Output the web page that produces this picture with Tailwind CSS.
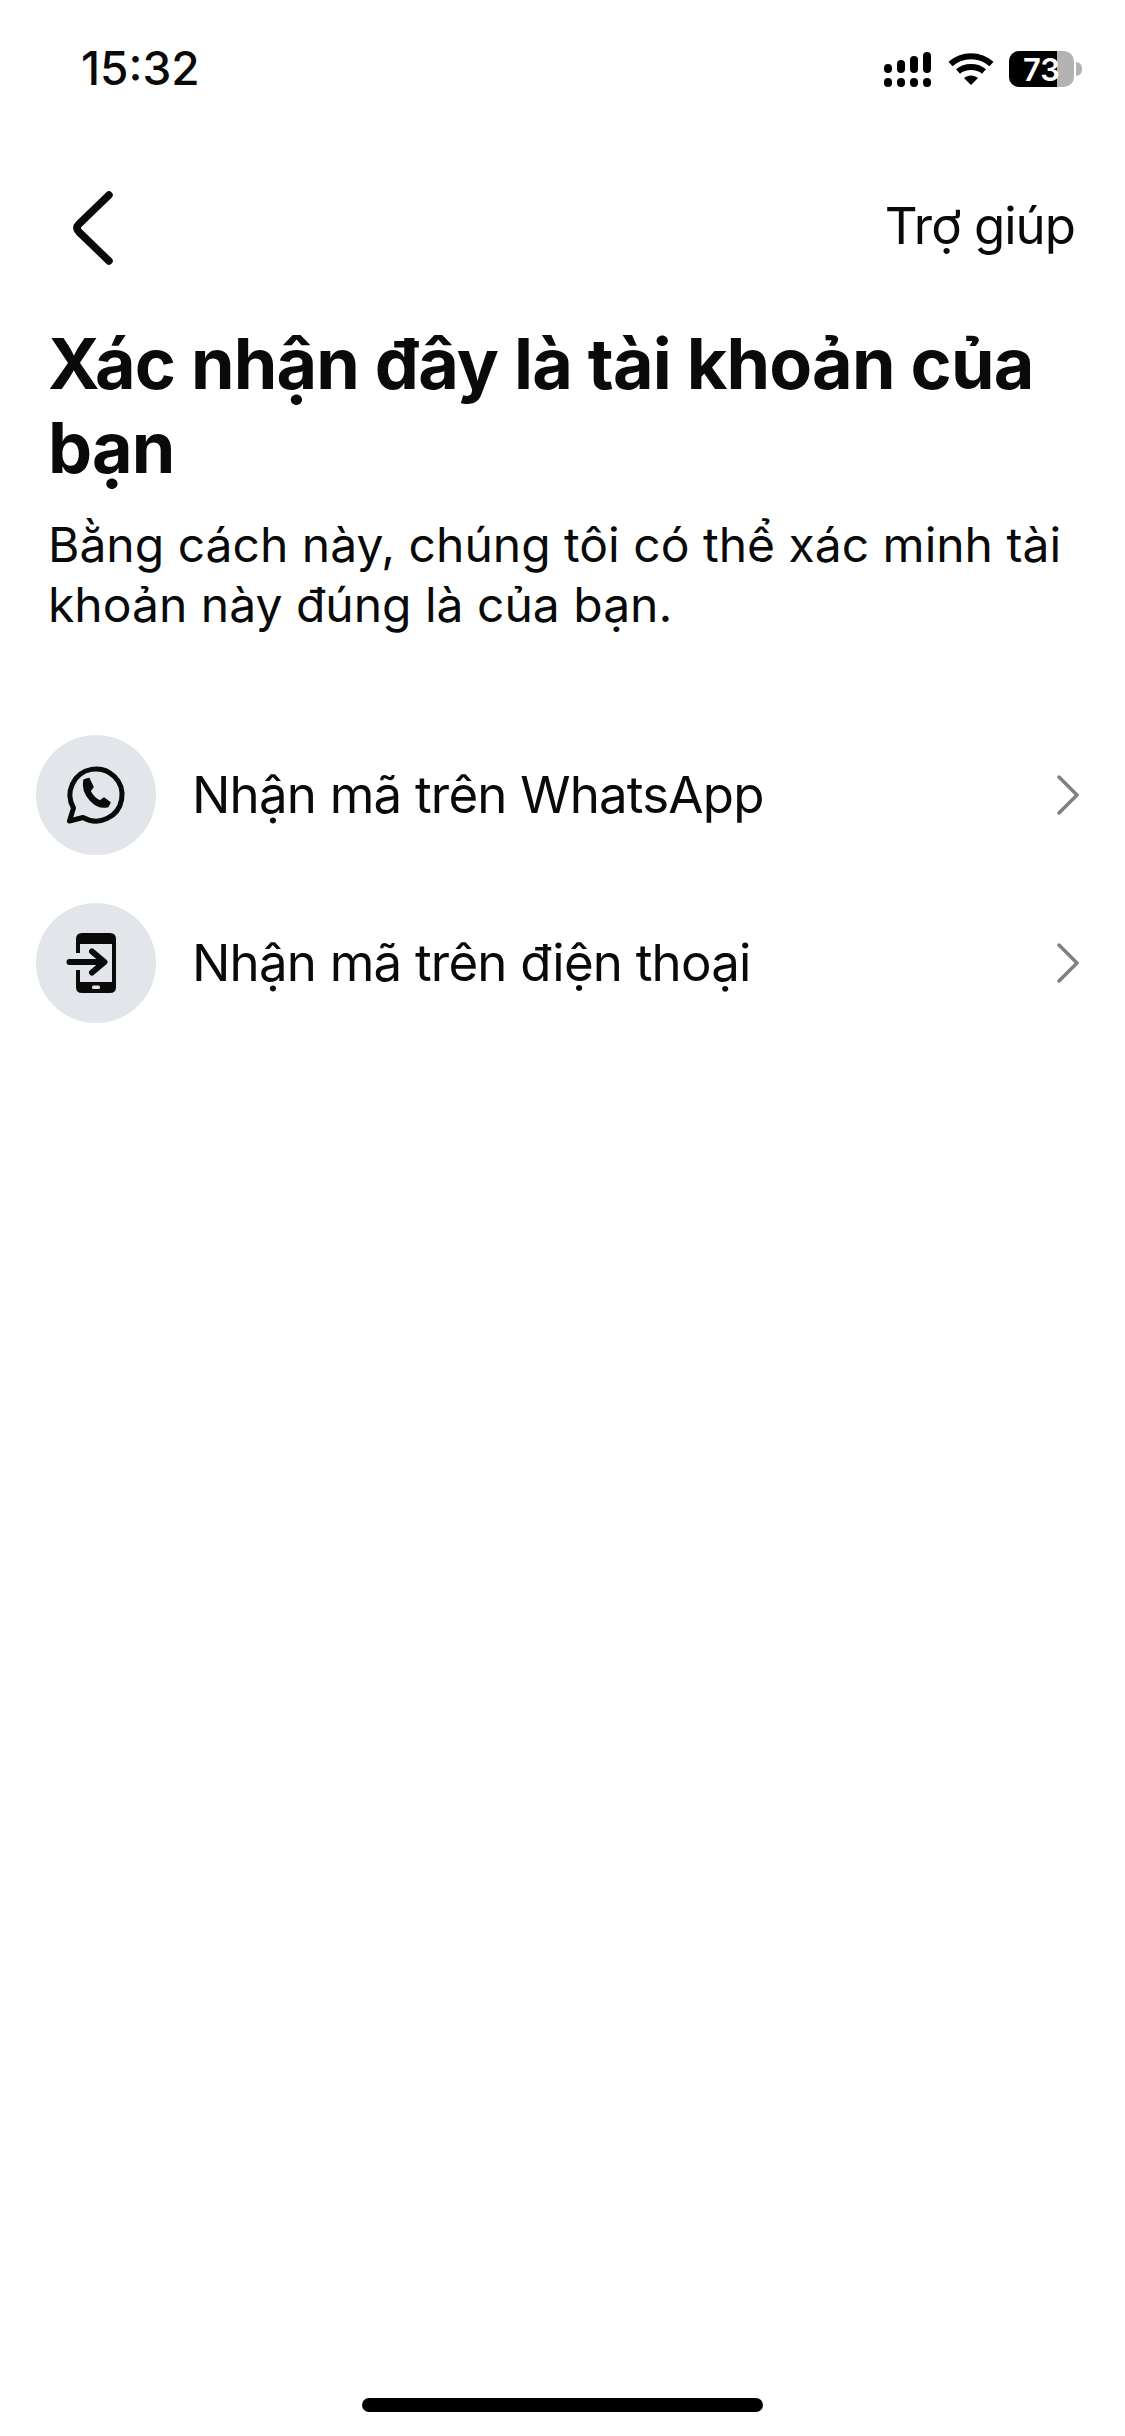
<!DOCTYPE html>
<html lang="vi">
<head>
<meta charset="utf-8">
<title>Xác nhận tài khoản</title>
<script src="https://cdn.jsdelivr.net/npm/@tailwindcss/browser@4"></script>
</head>
<body class="bg-white">
<div class="w-[1125px] h-[2436px] flex flex-col bg-white text-[#0a0a0a] font-['Inter','Noto_Sans',sans-serif] overflow-hidden">

  <!-- Status bar -->
  <div class="h-[137px] shrink-0 flex items-start justify-between pl-[81px] pr-[43px] pt-[40px]">
    <span class="text-[46px] leading-[56px] font-medium">15:32</span>
    <div class="flex items-center gap-[17px] pt-[11px]">
      <svg width="47" height="35" viewBox="0 0 47 35" fill="#000">
        <rect x="0" y="12" width="8" height="9" rx="4"/><rect x="13" y="8" width="8" height="13" rx="4"/><rect x="26" y="4" width="8" height="17" rx="4"/><rect x="39" y="0" width="8" height="21" rx="4"/>
        <rect x="0" y="26" width="8" height="9" rx="4"/><rect x="13" y="26" width="8" height="9" rx="4"/><rect x="26" y="26" width="8" height="9" rx="4"/><rect x="39" y="26" width="8" height="9" rx="4"/>
      </svg>
      <svg width="46" height="32" viewBox="0 0 46 32" fill="none" stroke="#000" stroke-width="6">
        <path d="M2.5 11 C14 0.5 32 0.5 43.5 11"/>
        <path d="M10 18.5 C17 12.5 29 12.5 36 18.5"/>
        <path d="M16 25 L23 32 L30 25 C26 21.5 20 21.5 16 25Z" fill="#000" stroke="none"/>
      </svg>
      <div class="flex items-center ml-[-2px]">
        <div class="relative w-[65px] h-[36px] rounded-[10px] overflow-hidden bg-[#b3b3b3]">
          <div class="absolute left-0 top-0 h-full w-[48px] bg-black"></div>
          <span class="absolute inset-0 flex items-center justify-center text-[31px] leading-none font-semibold text-white">73</span>
        </div>
        <div class="w-[6px] h-[14px] ml-[2px] rounded-r-full bg-[#b3b3b3]"></div>
      </div>
    </div>
  </div>

  <!-- Nav -->
  <div class="h-[180px] shrink-0 flex items-start justify-between pl-[71px] pr-[50px] pt-[54px]">
    <svg width="42" height="74" viewBox="0 0 42 74" fill="none" stroke="#0a0a0a" stroke-width="7.5" stroke-linecap="round" stroke-linejoin="round">
      <path d="M38 4 L8 33 Q4 37 8 41 L38 70" />
    </svg>
    <span class="text-[51px] leading-[60px] pt-[5px] tracking-[-1px]">Trợ giúp</span>
  </div>

  <!-- Heading -->
  <div class="pl-[48px] pr-[49px] shrink-0 pt-[5px]">
    <h1 class="text-[70px] leading-[84px] font-bold tracking-[-0.8px]">Xác nhận đây là tài khoản của bạn</h1>
    <p class="text-[48px] leading-[60px] mt-[25px]">Bằng cách này, chúng tôi có thể xác minh tài khoản này đúng là của bạn.</p>
  </div>

  <!-- Options -->
  <div class="mt-[100px] pl-[36px] pr-[46px] flex flex-col gap-[48px] shrink-0">
    <div class="flex items-center h-[120px]">
      <div class="w-[120px] h-[120px] rounded-full bg-[#e2e5ea] shrink-0">
        <svg width="120" height="120" viewBox="0 0 120 120" fill="none" stroke="#0a0a0a" stroke-width="5" stroke-linejoin="round">
          <path d="M37.5 73 A26 26 0 1 1 47 82.5 L33.5 86 Z"/>
          <path d="M48 45 L53 43.5 L57 52 L54 56 C56.5 61 59.5 64 64 66 L68 63 L74 67.5 L72 71.5 C60 75 45 60 48 45Z" fill="#0a0a0a" stroke-width="1.5"/>
        </svg>
      </div>
      <span class="ml-[36px] text-[51px] leading-[60px] tracking-[-0.8px] flex-1">Nhận mã trên WhatsApp</span>
      <svg width="22" height="40" viewBox="0 0 22 40" fill="none" stroke="#808080" stroke-width="3.5" stroke-linecap="round" stroke-linejoin="round">
        <path d="M2 2 L20 20 L2 38"/>
      </svg>
    </div>
    <div class="flex items-center h-[120px]">
      <div class="w-[120px] h-[120px] rounded-full bg-[#e2e5ea] shrink-0">
        <svg width="120" height="120" viewBox="0 0 120 120" fill="#0a0a0a">
          <path d="M40 36 Q40 30 46 30 H74 Q80 30 80 36 V84 Q80 90 74 90 H46 Q40 90 40 84 V67 H44 V79 H76 V41 H44 V50 H40 Z"/>
          <rect x="56" y="82.5" width="8" height="3.5" rx="1.5" fill="#e2e5ea"/>
          <path d="M33.5 59 H68 M56 48.5 L68.5 59 L56 69.5" fill="none" stroke="#0a0a0a" stroke-width="6" stroke-linecap="round" stroke-linejoin="round"/>
        </svg>
      </div>
      <span class="ml-[36px] text-[51px] leading-[60px] tracking-[-0.8px] flex-1">Nhận mã trên điện thoại</span>
      <svg width="22" height="40" viewBox="0 0 22 40" fill="none" stroke="#808080" stroke-width="3.5" stroke-linecap="round" stroke-linejoin="round">
        <path d="M2 2 L20 20 L2 38"/>
      </svg>
    </div>
  </div>

  <!-- Home indicator -->
  <div class="mt-auto mb-[24px] mx-auto w-[401px] h-[14px] rounded-full bg-black shrink-0"></div>
</div>
</body>
</html>
